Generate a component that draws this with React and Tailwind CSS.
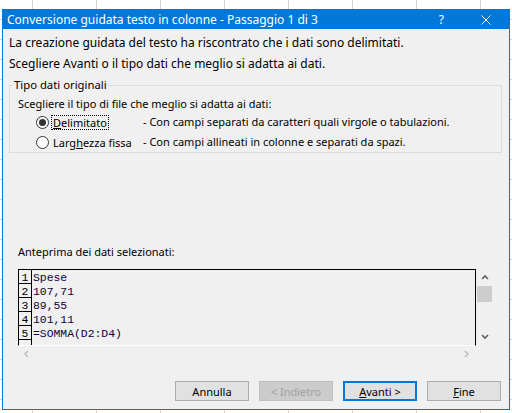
import React from "react";

const ROWS = ["Spese", "107,71", "89,55", "101,11", "=SOMMA(D2:D4)", ""];

function Chevron({ dir, className }) {
  const d = {
    up: "M1 5 L4 2 L7 5",
    down: "M1 2 L4 5 L7 2",
    left: "M5 1 L2 4 L5 7",
    right: "M2 1 L5 4 L2 7",
  }[dir];
  return (
    <svg width="8" height="8" viewBox="0 0 8 8" className={className}>
      <path d={d} fill="none" stroke="currentColor" strokeWidth="1.6" />
    </svg>
  );
}

function Radio({ checked }) {
  return (
    <span className="flex h-[13px] w-[13px] shrink-0 items-center justify-center rounded-full border border-[#333] bg-white">
      {checked && <span className="h-[7px] w-[7px] rounded-full bg-[#333]" />}
    </span>
  );
}

function Button({ children, variant }) {
  const cls =
    variant === "default"
      ? "border-2 border-[#0078d7] bg-[#e1e1e1] text-black"
      : variant === "disabled"
      ? "border border-[#bfbfbf] bg-[#cccccc] text-[#a0a0a0]"
      : "border border-[#adadad] bg-[#e1e1e1] text-black";
  return (
    <div className={`flex h-[20px] w-[74px] items-center justify-center text-[11px] leading-none ${cls}`}>
      {children}
    </div>
  );
}

export default function App() {
  return (
    <div className="h-[413px] w-[512px] overflow-hidden bg-white bg-[linear-gradient(to_right,#d4d4d4_1px,transparent_1px),linear-gradient(to_bottom,#d4d4d4_1px,transparent_1px)] bg-size-[64px_20px] bg-position-[32px_19px] pl-[2px] pt-[9px] font-['Segoe_UI','Noto_Sans',sans-serif] text-[12px] text-black">
      <div className="flex h-[401px] w-[508px] flex-col border border-[#0078d7] bg-[#f0f0f0]">
        {/* title bar */}
        <div className="flex h-[19px] items-center bg-[#0078d7] pl-[4px] text-white">
          <span className="leading-none">Conversione guidata testo in colonne - Passaggio 1 di 3</span>
          <span className="ml-auto mr-[37px] leading-none">?</span>
          <svg width="10" height="10" viewBox="0 0 10 10" className="mr-[18px]">
            <path d="M0.5 0.5 L9.5 9.5 M9.5 0.5 L0.5 9.5" stroke="white" strokeWidth="1" />
          </svg>
        </div>

        <div className="mt-[6px] pl-[6px] leading-[16px]">
          La creazione guidata del testo ha riscontrato che i dati sono delimitati.
        </div>
        <div className="mt-[5px] pl-[6px] leading-[16px]">
          Scegliere Avanti o il tipo dati che meglio si adatta ai dati.
        </div>

        <fieldset className="ml-[6px] mt-[5px] w-[493px] border border-[#dcdcdc] text-[11px]">
          <legend className="ml-[3px] px-[1px] text-[11.3px] leading-[16px]">Tipo dati originali</legend>
          <div className="mt-[3px] pl-[8px] leading-[16px]">Scegliere il tipo di file che meglio si adatta ai dati:</div>
          <div className="flex h-[20px] items-center pl-[26px]">
            <div className="flex w-[107px] items-center">
              <Radio checked />
              <span className="ml-[2px] border border-dotted border-black px-[1px] leading-[13px]">
                <u>D</u>elimitato
              </span>
            </div>
            <span className="leading-[16px]">- Con campi separati da caratteri quali virgole o tabulazioni.</span>
          </div>
          <div className="flex h-[20px] items-center pl-[26px]">
            <div className="flex w-[107px] items-center">
              <Radio />
              <span className="ml-[2px] border border-transparent px-[1px] leading-[13px]">
                Larg<u>h</u>ezza fissa
              </span>
            </div>
            <span className="leading-[16px]">- Con campi allineati in colonne e separati da spazi.</span>
          </div>
        </fieldset>

        <div className="mt-[91px] pl-[15px] text-[11px] leading-[16px]">Anteprima dei dati selezionati:</div>

        <div className="ml-[15px] mt-[9px] flex flex-col">
          <div className="flex">
            <div className="h-[77px] w-[458px] overflow-hidden border-x border-t border-b border-x-black border-t-black border-b-white font-['Liberation_Mono',monospace] text-[11.4px]">
              {ROWS.map((r, i) => (
                <div key={i} className="flex h-[14px]">
                  <div className="h-[14px] w-[13px] shrink-0 border-b border-r border-black pt-[3px] text-center leading-[11px]">
                    {i < 5 ? i + 1 : ""}
                  </div>
                  <div className="pl-[1px] pt-[3px] leading-[11px] text-[#10003a]">{r}</div>
                </div>
              ))}
            </div>
            <div className="flex h-[77px] w-[17px] flex-col items-center text-[#606060]">
              <Chevron dir="up" className="mt-[5px]" />
              <div className="mt-[4px] h-[16px] w-[15px] bg-[#cdcdcd]" />
              <Chevron dir="down" className="mt-auto mb-[5px]" />
            </div>
          </div>
          <div className="flex h-[15px] w-[458px] items-center justify-between px-[5px] text-[#c0c0c0]">
            <Chevron dir="left" />
            <Chevron dir="right" />
          </div>
        </div>

        <div className="mt-auto flex justify-end gap-[10px] pb-[8px] pr-[8px]">
          <Button>Annulla</Button>
          <Button variant="disabled">&lt; Indietro</Button>
          <Button variant="default">
            <span>
              <u>A</u>vanti &gt;
            </span>
          </Button>
          <Button>
            <span>
              <u>F</u>ine
            </span>
          </Button>
        </div>
      </div>
    </div>
  );
}
